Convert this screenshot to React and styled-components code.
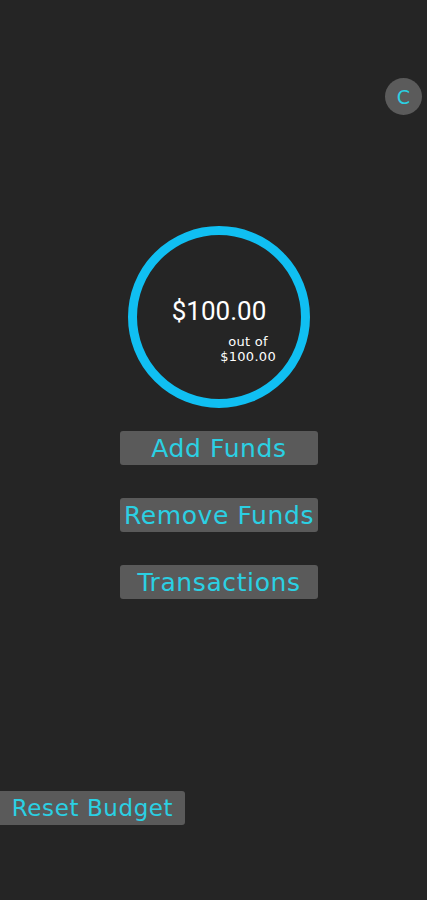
import React from 'react';
import styled, { createGlobalStyle } from 'styled-components';

const GlobalStyle = createGlobalStyle`
  html, body {
    margin: 0;
    padding: 0;
    background-color: #252525;
  }
`;

const Page = styled.div`
  min-height: 900px;
  display: flex;
  flex-direction: column;
  background-color: #252525;
  font-family: "DejaVu Sans", sans-serif;
`;

const TopBar = styled.div`
  display: flex;
  justify-content: flex-end;
  padding: 78px 5px 0 0;
`;

const CircleButton = styled.button`
  width: 37px;
  height: 37px;
  border-radius: 50%;
  border: none;
  background-color: #5b5b5b;
  color: #2bd0e3;
  font-family: "DejaVu Sans", sans-serif;
  font-size: 19px;
  padding: 0;
  display: flex;
  align-items: center;
  justify-content: center;
`;

const Main = styled.div`
  display: flex;
  flex-direction: column;
  align-items: center;
  padding: 111px 0 0 11px;
`;

const Ring = styled.div`
  width: 164px;
  height: 164px;
  border: 9px solid #10bff2;
  border-radius: 50%;
  display: flex;
  flex-direction: column;
  align-items: center;
  justify-content: center;
  color: #fff;
  font-family: Roboto, sans-serif;
`;

const Amount = styled.div`
  font-size: 26px;
  margin-top: 26px;
`;

const OutOf = styled.div`
  align-self: flex-end;
  margin-right: 25px;
  margin-top: 8px;
  font-family: "DejaVu Sans", sans-serif;
  font-size: 13px;
  line-height: 15px;
  letter-spacing: 0.3px;
  text-align: center;
`;

const ActionList = styled.div`
  display: flex;
  flex-direction: column;
  gap: 33px;
  margin-top: 23px;
`;

const ActionButton = styled.button`
  width: 198px;
  height: 34px;
  border: none;
  border-radius: 3px;
  background-color: #5a5a5a;
  color: #2bd0e3;
  font-family: "DejaVu Sans", sans-serif;
  font-size: ${props => props.$size || 25}px;
  letter-spacing: 0.6px;
  padding: 0;
  white-space: nowrap;
  display: flex;
  align-items: center;
  justify-content: center;
`;

const Footer = styled.div`
  margin-top: auto;
  padding-bottom: 75px;
`;

const ResetButton = styled(ActionButton)`
  width: 185px;
  border-radius: 0 3px 3px 0;
`;

export default function App() {
  return (
    <Page>
      <GlobalStyle />
      <TopBar>
        <CircleButton>C</CircleButton>
      </TopBar>
      <Main>
        <Ring>
          <Amount>$100.00</Amount>
          <OutOf>
            out of
            <br />
            $100.00
          </OutOf>
        </Ring>
        <ActionList>
          <ActionButton>Add Funds</ActionButton>
          <ActionButton>Remove Funds</ActionButton>
          <ActionButton>Transactions</ActionButton>
        </ActionList>
      </Main>
      <Footer>
        <ResetButton $size={23}>Reset Budget</ResetButton>
      </Footer>
    </Page>
  );
}
